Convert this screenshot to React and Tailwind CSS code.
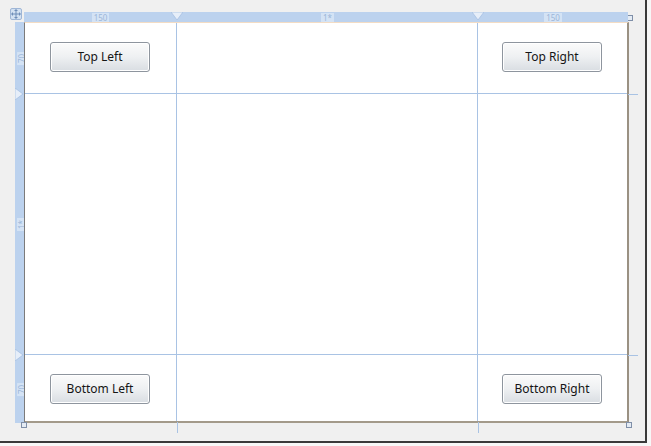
import React from 'react';

const font = { fontFamily: '"Noto Sans", "Liberation Sans", sans-serif' };

function Btn({ children }) {
  return (
    <button className="w-[100px] h-[30px] rounded-[3px] border border-[#8e959e] bg-gradient-to-b from-[#fbfbfb] via-[#eef0f2] to-[#d9dde2] text-[12px] text-[#151515] shadow-[inset_0_0_0_1px_#ffffff]">
      {children}
    </button>
  );
}

function Handle() {
  return <div className="w-[6px] h-[6px] border border-[#7f8fa8] bg-[#e4ebf4]" />;
}

export default function App() {
  return (
    <div className="w-[651px] h-[446px] bg-[#f7f7f7] overflow-hidden" style={font}>
      <div className="relative w-[647px] h-[443px] bg-[#f0f0f0] border-r-2 border-b-2 border-[#3a3a3a] pl-[15px] pt-[12px]">
        {/* move glyph */}
        <div className="absolute left-[10px] top-[8px] w-[12px] h-[12px] rounded-[2px] border border-[#9fb6d6] bg-[#d3e1f2] flex items-center justify-center z-10">
          <svg width="10" height="10" viewBox="0 0 10 10" fill="#6f8db8">
            <rect x="4.5" y="1.5" width="1" height="7" />
            <rect x="1.5" y="4.5" width="7" height="1" />
            <path d="M5 0 L7 2 L3 2 Z M5 10 L7 8 L3 8 Z M0 5 L2 3 L2 7 Z M10 5 L8 3 L8 7 Z" />
          </svg>
        </div>

        {/* top ruler */}
        <div className="flex h-[10px]">
          <div className="w-[9px]" />
          <div className="relative w-[604px] h-[10px] bg-[#bcd2ee] grid grid-cols-[153px_301px_150px] text-[8px] leading-[9px] text-[#9cb6d8]">
            <div className="flex items-center justify-center"><span className="bg-[#d4e3f5] px-[2px]">150</span></div>
            <div className="flex items-center justify-center"><span className="bg-[#d4e3f5] px-[2px]">1*</span></div>
            <div className="flex items-center justify-center"><span className="bg-[#d4e3f5] px-[2px]">150</span></div>
            <svg className="absolute left-[147px] top-0" width="12" height="9" viewBox="0 0 12 9"><path d="M0 0 L12 0 L6 8 Z" fill="#e6eef9" stroke="#a7c0e2" strokeWidth="0.8" /></svg>
            <svg className="absolute left-[448px] top-0" width="12" height="9" viewBox="0 0 12 9"><path d="M0 0 L12 0 L6 8 Z" fill="#e6eef9" stroke="#a7c0e2" strokeWidth="0.8" /></svg>
          </div>
          <div className="mt-[3px] -ml-[1px]"><Handle /></div>
        </div>

        {/* body */}
        <div className="flex">
          <div className="relative w-[9px] h-[401px] bg-[#bcd2ee] grid grid-rows-[72px_261px_68px] text-[8px] leading-[9px] text-[#9cb6d8]">
            <div className="flex items-center justify-center"><span className="-rotate-90 bg-[#d4e3f5] px-[2px]">70</span></div>
            <div className="flex items-center justify-center"><span className="-rotate-90 bg-[#d4e3f5] px-[2px]">1*</span></div>
            <div className="flex items-center justify-center"><span className="-rotate-90 bg-[#d4e3f5] px-[2px]">70</span></div>
            <svg className="absolute left-0 top-[66px]" width="9" height="12" viewBox="0 0 9 12"><path d="M0 0 L8 6 L0 12 Z" fill="#e6eef9" stroke="#a7c0e2" strokeWidth="0.8" /></svg>
            <svg className="absolute left-0 top-[327px]" width="9" height="12" viewBox="0 0 9 12"><path d="M0 0 L8 6 L0 12 Z" fill="#e6eef9" stroke="#a7c0e2" strokeWidth="0.8" /></svg>
          </div>

          <div className="relative w-[605px] h-[401px] bg-white border-l border-[#7b7b7b] border-t border-t-[#f3dcc4] border-r-2 border-r-[#9a9183] border-b-2 border-b-[#a39a8a] grid grid-cols-[152px_301px_1fr] grid-rows-[71px_261px_1fr]">
            <div className="border-r border-b border-[#a9c3e4] pl-[25px] pt-[19px]"><Btn>Top Left</Btn></div>
            <div className="border-r border-b border-[#a9c3e4]" />
            <div className="border-b border-[#a9c3e4] flex justify-end pr-[25px] pt-[19px]"><Btn>Top Right</Btn></div>
            <div className="border-r border-b border-[#a9c3e4]" />
            <div className="border-r border-b border-[#a9c3e4]" />
            <div className="border-b border-[#a9c3e4]" />
            <div className="border-r border-[#a9c3e4] flex items-end pl-[25px] pb-[17px]"><Btn>Bottom Left</Btn></div>
            <div className="border-r border-[#a9c3e4]" />
            <div className="flex items-end justify-end pr-[25px] pb-[17px]"><Btn>Bottom Right</Btn></div>

            {/* grid line extensions past the canvas edge */}
            <div className="absolute left-[603px] top-[71px] w-[10px] h-px bg-[#a9c3e4]" />
            <div className="absolute left-[603px] top-[332px] w-[10px] h-px bg-[#a9c3e4]" />
            <div className="absolute left-[152px] top-[399px] w-px h-[11px] bg-[#a9c3e4]" />
            <div className="absolute left-[453px] top-[399px] w-px h-[11px] bg-[#a9c3e4]" />
            <div className="absolute left-[-4px] top-[399px]"><Handle /></div>
            <div className="absolute left-[601px] top-[399px]"><Handle /></div>
          </div>
        </div>
      </div>
    </div>
  );
}
